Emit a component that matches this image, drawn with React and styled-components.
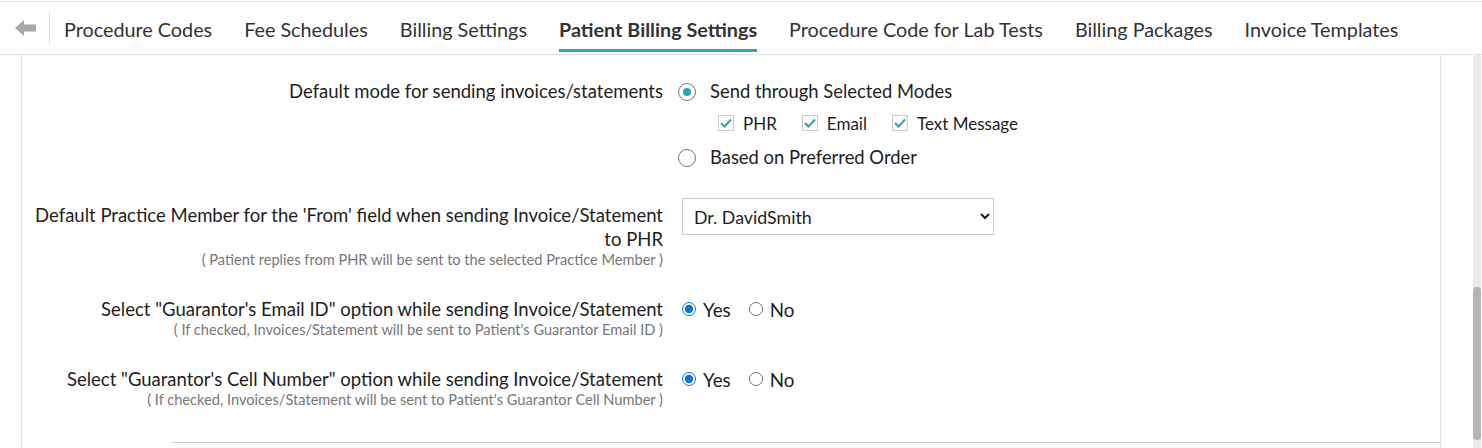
import React from 'react';
import styled, { createGlobalStyle } from 'styled-components';

const GlobalStyle = createGlobalStyle`
  html, body {
    margin: 0;
    padding: 0;
    background: #fff;
    font-family: Lato, 'Open Sans', sans-serif;
    color: #222;
  }
`;

const tabs = [
  'Procedure Codes',
  'Fee Schedules',
  'Billing Settings',
  'Patient Billing Settings',
  'Procedure Code for Lab Tests',
  'Billing Packages',
  'Invoice Templates',
];

const Tick = () => (
  <svg width="12" height="10" viewBox="0 0 12 10">
    <path d="M1 5 L4.5 8.5 L11 1.5" stroke="#2aa6ae" strokeWidth="2" fill="none" />
  </svg>
);

const App = () => (
  <Page>
    <GlobalStyle />
    <NavBar>
      <BackButton>
        <svg width="22" height="16" viewBox="0 0 22 16">
          <path d="M0 8 L9 0 L9 4.5 L21 4.5 L21 11.5 L9 11.5 L9 16 Z" fill="#a8a8a8" />
        </svg>
      </BackButton>
      <TabList>
        {tabs.map((t) => (
          <Tab key={t} $active={t === 'Patient Billing Settings'}>
            {t}
          </Tab>
        ))}
      </TabList>
    </NavBar>

    <Body>
      <Panel>
        <Row $top={24}>
          <Label>
            <LabelText>Default mode for sending invoices/statements</LabelText>
          </Label>
          <Controls>
            <RadioLine>
              <TealRadio $checked />
              <OptionText>Send through Selected Modes</OptionText>
            </RadioLine>
            <CheckRow>
              <CheckItem>
                <CheckBox>
                  <Tick />
                </CheckBox>
                PHR
              </CheckItem>
              <CheckItem>
                <CheckBox>
                  <Tick />
                </CheckBox>
                Email
              </CheckItem>
              <CheckItem>
                <CheckBox>
                  <Tick />
                </CheckBox>
                Text Message
              </CheckItem>
            </CheckRow>
            <RadioLine>
              <TealRadio />
              <OptionText>Based on Preferred Order</OptionText>
            </RadioLine>
          </Controls>
        </Row>

        <Row $top={34}>
          <Label>
            <LabelText $pad={8}>
              Default Practice Member for the 'From' field when sending Invoice/Statement to PHR
            </LabelText>
            <Hint>( Patient replies from PHR will be sent to the selected Practice Member )</Hint>
          </Label>
          <Controls>
            <Select defaultValue="ds">
              <option value="ds">Dr. DavidSmith</option>
            </Select>
          </Controls>
        </Row>

        <Row $top={29}>
          <Label>
            <LabelText>Select "Guarantor's Email ID" option while sending Invoice/Statement</LabelText>
            <Hint>( If checked, Invoices/Statement will be sent to Patient's Guarantor Email ID )</Hint>
          </Label>
          <Controls>
            <YesNo>
              <Choice>
                <NativeRadio type="radio" name="email" defaultChecked />
                Yes
              </Choice>
              <Choice>
                <NativeRadio type="radio" name="email" />
                No
              </Choice>
            </YesNo>
          </Controls>
        </Row>

        <Row $top={29}>
          <Label>
            <LabelText>Select "Guarantor's Cell Number" option while sending Invoice/Statement</LabelText>
            <Hint>( If checked, Invoices/Statement will be sent to Patient's Guarantor Cell Number )</Hint>
          </Label>
          <Controls>
            <YesNo>
              <Choice>
                <NativeRadio type="radio" name="cell" defaultChecked />
                Yes
              </Choice>
              <Choice>
                <NativeRadio type="radio" name="cell" />
                No
              </Choice>
            </YesNo>
          </Controls>
        </Row>

        <Separator />
      </Panel>
      <ScrollTrack>
        <ScrollThumb />
      </ScrollTrack>
    </Body>
  </Page>
);

const Page = styled.div`
  width: 1482px;
  height: 448px;
  overflow: hidden;
`;

const NavBar = styled.div`
  height: 52px;
  margin-top: 1px;
  border-top: 1px solid #e6e6e6;
  border-bottom: 1px solid #e3e3e3;
  display: flex;
  align-items: center;
`;

const BackButton = styled.div`
  width: 50px;
  height: 32px;
  display: flex;
  align-items: center;
  justify-content: center;
  padding-left: 2px;
  box-sizing: border-box;
  border-right: 1px solid #dcdcdc;
`;

const TabList = styled.div`
  display: flex;
  align-items: stretch;
  height: 100%;
  padding-left: 14px;
  gap: 32px;
`;

const Tab = styled.div`
  display: flex;
  align-items: center;
  font-size: 19.8px;
  color: #333;
  font-weight: ${(p) => (p.$active ? 700 : 400)};
  border-bottom: 3px solid ${(p) => (p.$active ? '#27a9b1' : 'transparent')};
  padding-top: 6px;
  margin-bottom: 2px;
  box-sizing: border-box;
`;

const Body = styled.div`
  display: flex;
  height: 394px;
  padding-left: 21px;
`;

const Panel = styled.div`
  width: 1420px;
  border-left: 1px solid #e3e3e3;
  border-right: 1px solid #e3e3e3;
  box-sizing: border-box;
  display: flex;
  flex-direction: column;
`;

const Row = styled.div`
  display: flex;
  margin-top: ${(p) => p.$top}px;
`;

const Label = styled.div`
  width: 641px;
  text-align: right;
  flex-shrink: 0;
`;

const LabelText = styled.div`
  font-size: 18.5px;
  line-height: 24px;
  color: #1e1e1e;
  padding-left: ${(p) => p.$pad || 0}px;
`;

const Hint = styled.div`
  font-size: 14.6px;
  line-height: 17px;
  color: #777;
`;

const Controls = styled.div`
  padding-left: 15px;
  display: flex;
  flex-direction: column;
`;

const RadioLine = styled.div`
  display: flex;
  align-items: center;
  gap: 14px;
  height: 24px;
`;

const TealRadio = styled.span`
  width: 18px;
  height: 18px;
  border-radius: 50%;
  border: 1px solid #767676;
  box-sizing: border-box;
  display: flex;
  align-items: center;
  justify-content: center;
  margin-top: 2px;
  &::after {
    content: '';
    width: 8px;
    height: 8px;
    border-radius: 50%;
    background: ${(p) => (p.$checked ? '#27a9b1' : 'transparent')};
  }
`;

const OptionText = styled.span`
  font-size: 18.4px;
  color: #1e1e1e;
`;

const CheckRow = styled.div`
  display: flex;
  gap: 25px;
  padding-left: 40px;
  margin: 11px 0 13px;
  height: 18px;
`;

const CheckItem = styled.label`
  display: flex;
  align-items: center;
  gap: 9px;
  font-size: 17px;
  color: #1e1e1e;
`;

const CheckBox = styled.span`
  width: 16px;
  height: 16px;
  border: 1px solid #ccc;
  box-sizing: border-box;
  display: flex;
  align-items: center;
  justify-content: center;
  background: #fff;
`;

const Select = styled.select`
  margin-left: 4px;
  margin-top: -5px;
  width: 312px;
  height: 37px;
  border: 1px solid #ccc;
  border-radius: 0;
  background: #fff;
  font-family: Lato, sans-serif;
  font-size: 17.8px;
  color: #1e1e1e;
  padding: 0 7px;
`;

const YesNo = styled.div`
  display: flex;
  gap: 14px;
  align-items: center;
  height: 24px;
`;

const Choice = styled.label`
  display: flex;
  align-items: center;
  gap: 7px;
  font-size: 18.8px;
  color: #1e1e1e;
`;

const NativeRadio = styled.input`
  margin: 0 0 0 4px;
  width: 14px;
  height: 14px;
  accent-color: #0a74da;
`;

const Separator = styled.div`
  margin: 34px 0 0 150px;
  border-top: 1px solid #d0d0d0;
  width: 1268px;
`;

const ScrollTrack = styled.div`
  margin-left: 32px;
  width: 8px;
  background: #ebebeb;
  border-radius: 4px 0 0 0;
  position: relative;
`;

const ScrollThumb = styled.div`
  position: absolute;
  left: 0;
  right: 0;
  top: 232px;
  height: 153px;
  background: #b5b5b5;
  border-radius: 4px;
`;

export default App;
